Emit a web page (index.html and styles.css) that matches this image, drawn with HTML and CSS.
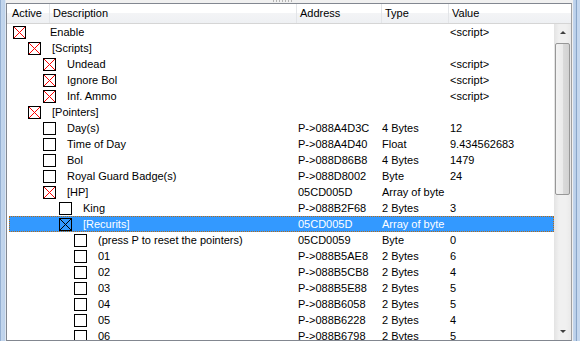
FILE: index.html
```html
<!DOCTYPE html>
<html lang="en">
<head>
    <meta charset="UTF-8">
    <title>Address List</title>
    <link rel="stylesheet" href="styles.css">
</head>
<body>

    <div class="window">
        <div class="frame frame-left"></div>

        <div class="main">
            <!-- Splitter grip -->
            <div class="topbar"><span class="grip"></span></div>

            <div class="list">
                <div class="header">
                    <div class="hcell first">Active</div>
                    <div class="hcell">Description</div>
                    <div class="hcell">Address</div>
                    <div class="hcell">Type</div>
                    <div class="hcell">Value</div>
                </div>

                <div class="body">
                    <div class="rows">
                        <div class="row"><div class="name l0"><span class="box on"></span><span class="label">Enable</span></div><div class="addr"></div><div class="type"></div><div class="val">&lt;script&gt;</div></div>
                        <div class="row"><div class="name l1"><span class="box on"></span><span class="label">[Scripts]</span></div><div class="addr"></div><div class="type"></div><div class="val"></div></div>
                        <div class="row"><div class="name l2"><span class="box on"></span><span class="label">Undead</span></div><div class="addr"></div><div class="type"></div><div class="val">&lt;script&gt;</div></div>
                        <div class="row"><div class="name l2"><span class="box on"></span><span class="label">Ignore Bol</span></div><div class="addr"></div><div class="type"></div><div class="val">&lt;script&gt;</div></div>
                        <div class="row"><div class="name l2"><span class="box on"></span><span class="label">Inf. Ammo</span></div><div class="addr"></div><div class="type"></div><div class="val">&lt;script&gt;</div></div>
                        <div class="row"><div class="name l1"><span class="box on"></span><span class="label">[Pointers]</span></div><div class="addr"></div><div class="type"></div><div class="val"></div></div>
                        <div class="row"><div class="name l2"><span class="box"></span><span class="label">Day(s)</span></div><div class="addr">P-&gt;088A4D3C</div><div class="type">4 Bytes</div><div class="val">12</div></div>
                        <div class="row"><div class="name l2"><span class="box"></span><span class="label">Time of Day</span></div><div class="addr">P-&gt;088A4D40</div><div class="type">Float</div><div class="val">9.434562683</div></div>
                        <div class="row"><div class="name l2"><span class="box"></span><span class="label">Bol</span></div><div class="addr">P-&gt;088D86B8</div><div class="type">4 Bytes</div><div class="val">1479</div></div>
                        <div class="row"><div class="name l2"><span class="box"></span><span class="label">Royal Guard Badge(s)</span></div><div class="addr">P-&gt;088D8002</div><div class="type">Byte</div><div class="val">24</div></div>
                        <div class="row"><div class="name l2"><span class="box on"></span><span class="label">[HP]</span></div><div class="addr">05CD005D</div><div class="type">Array of byte</div><div class="val"></div></div>
                        <div class="row"><div class="name l3"><span class="box"></span><span class="label">King</span></div><div class="addr">P-&gt;088B2F68</div><div class="type">2 Bytes</div><div class="val">3</div></div>
                        <div class="row selected"><div class="name l3"><span class="box on"></span><span class="label">[Recurits]</span></div><div class="addr">05CD005D</div><div class="type">Array of byte</div><div class="val"></div></div>
                        <div class="row"><div class="name l4"><span class="box"></span><span class="label">(press P to reset the pointers)</span></div><div class="addr">05CD0059</div><div class="type">Byte</div><div class="val">0</div></div>
                        <div class="row"><div class="name l4"><span class="box"></span><span class="label">01</span></div><div class="addr">P-&gt;088B5AE8</div><div class="type">2 Bytes</div><div class="val">6</div></div>
                        <div class="row"><div class="name l4"><span class="box"></span><span class="label">02</span></div><div class="addr">P-&gt;088B5CB8</div><div class="type">2 Bytes</div><div class="val">4</div></div>
                        <div class="row"><div class="name l4"><span class="box"></span><span class="label">03</span></div><div class="addr">P-&gt;088B5E88</div><div class="type">2 Bytes</div><div class="val">5</div></div>
                        <div class="row"><div class="name l4"><span class="box"></span><span class="label">04</span></div><div class="addr">P-&gt;088B6058</div><div class="type">2 Bytes</div><div class="val">5</div></div>
                        <div class="row"><div class="name l4"><span class="box"></span><span class="label">05</span></div><div class="addr">P-&gt;088B6228</div><div class="type">2 Bytes</div><div class="val">4</div></div>
                        <div class="row"><div class="name l4"><span class="box"></span><span class="label">06</span></div><div class="addr">P-&gt;088B6798</div><div class="type">2 Bytes</div><div class="val">5</div></div>
                    </div>

                    <!-- Vertical scrollbar -->
                    <div class="scrollbar">
                        <div class="arrow up"></div>
                        <div class="track">
                            <div class="thumb"></div>
                        </div>
                        <div class="arrow down"></div>
                    </div>
                </div>
            </div>
        </div>

        <div class="frame frame-right"></div>
    </div>

</body>
</html>
```

FILE: styles.css
```css
body {
    margin: 0;
    width: 580px;
    height: 341px;
    overflow: hidden;
    font-family: "Liberation Sans", Arial, sans-serif;
    font-size: 11px;
    color: #000;
    background: #f0f0f0;
}
.window {
    display: flex;
    height: 341px;
}
.frame-left {
    width: 6px;
    background: linear-gradient(to right, #95b0d2 0, #95b0d2 1px, #c4d7ee 1px, #bcd1ea 5px, #dfe8f3 5px);
}
.frame-right {
    width: 8px;
    background: linear-gradient(to right, #f0f0f0 0, #f0f0f0 1px, #c4d7ee 1px, #b7cde8 4px, #8aa6c8 4px, #8aa6c8 5px, #c4d7ee 5px);
}
.main {
    flex: 1;
    display: flex;
    flex-direction: column;
    min-width: 0;
}
.topbar {
    height: 3px;
    display: flex;
    justify-content: center;
    padding-right: 8px;
}
.grip {
    width: 20px;
    height: 2px;
    margin-left: -4px;
    background: repeating-linear-gradient(to right, #b4b4b4 0, #b4b4b4 1px, transparent 1px, transparent 3px);
}
.list {
    flex: 1;
    border: 1px solid #828790;
    border-right-color: #a0a0a0;
    background: #fff;
    display: flex;
    flex-direction: column;
    overflow: hidden;
}
.header {
    display: grid;
    grid-template-columns: 42px 247px 85px 67px 1fr;
    height: 19px;
    border-bottom: 1px solid #d5d5d5;
    background: linear-gradient(to bottom, #fff 0, #fff 50%, #f3f4f6 50%, #eef0f3 100%);
}
.hcell {
    line-height: 19px;
    padding-left: 3px;
    border-left: 1px solid #e3e5e8;
    white-space: nowrap;
}
.hcell.first {
    border-left: none;
    padding-left: 5px;
}
.body {
    flex: 1;
    display: flex;
    min-height: 0;
}
.rows {
    flex: 1;
    overflow: hidden;
}
.row {
    display: grid;
    grid-template-columns: 289px 85px 67px 1fr;
    height: 16px;
    line-height: 16px;
    white-space: nowrap;
}
.row.selected {
    color: #fff;
    background: linear-gradient(to right, transparent 2px, #3399ff 2px);
    position: relative;
}
.row.selected::after {
    content: "";
    position: absolute;
    left: 2px;
    right: 0;
    top: 0;
    bottom: 0;
    border: 1px dotted #b86a14;
}
.name {
    display: flex;
    align-items: flex-start;
}
.l0 { padding-left: 6px; }
.l1 { padding-left: 21px; }
.l2 { padding-left: 36px; }
.l3 { padding-left: 52px; }
.l4 { padding-left: 67px; }
.label {
    margin-left: 11px;
}
.l0 .label {
    margin-left: 24px;
}
.box {
    width: 11px;
    height: 11px;
    margin-top: 2px;
    border: 1px solid #000;
    flex: none;
}
.box.on {
    background: url("data:image/svg+xml,%3Csvg xmlns='http://www.w3.org/2000/svg' width='11' height='11' shape-rendering='crispEdges'%3E%3Cpath d='M0 0.5h1M1 1.5h1M2 2.5h1M3 3.5h1M4 4.5h1M5 5.5h1M6 6.5h1M7 7.5h1M8 8.5h1M9 9.5h1M10 10.5h1M10 0.5h1M9 1.5h1M8 2.5h1M7 3.5h1M6 4.5h1M4 6.5h1M3 7.5h1M2 8.5h1M1 9.5h1M0 10.5h1' stroke='%23ff0000'/%3E%3C/svg%3E") no-repeat;
}
.selected .box.on {
    background: url("data:image/svg+xml,%3Csvg xmlns='http://www.w3.org/2000/svg' width='11' height='11' shape-rendering='crispEdges'%3E%3Cpath d='M0 0.5h1M1 1.5h1M2 2.5h1M3 3.5h1M4 4.5h1M5 5.5h1M6 6.5h1M7 7.5h1M8 8.5h1M9 9.5h1M10 10.5h1M10 0.5h1M9 1.5h1M8 2.5h1M7 3.5h1M6 4.5h1M4 6.5h1M3 7.5h1M2 8.5h1M1 9.5h1M0 10.5h1' stroke='%23000'/%3E%3C/svg%3E") no-repeat;
}
.addr { padding-left: 2px; }
.type { padding-left: 1px; }
.val { padding-left: 2px; }
.scrollbar {
    width: 17px;
    display: flex;
    flex-direction: column;
    background: linear-gradient(to right, #e3e3e3, #f0f0f0 30%, #f0f0f0 70%, #e9e9e9);
}
.arrow {
    height: 17px;
    display: flex;
    align-items: center;
    justify-content: center;
}
.arrow::before {
    content: "";
    border-left: 3px solid transparent;
    border-right: 3px solid transparent;
}
.arrow.up::before {
    border-bottom: 3px solid #404040;
}
.arrow.down::before {
    border-top: 3px solid #404040;
}
.track {
    flex: 1;
    padding-top: 2px;
}
.thumb {
    height: 150px;
    margin: 0 1px;
    border: 1px solid #979797;
    border-radius: 2px;
    background: linear-gradient(to right, #f2f2f2, #ebebeb 50%, #dbdbdb 50%, #d2d2d2);
}
```
